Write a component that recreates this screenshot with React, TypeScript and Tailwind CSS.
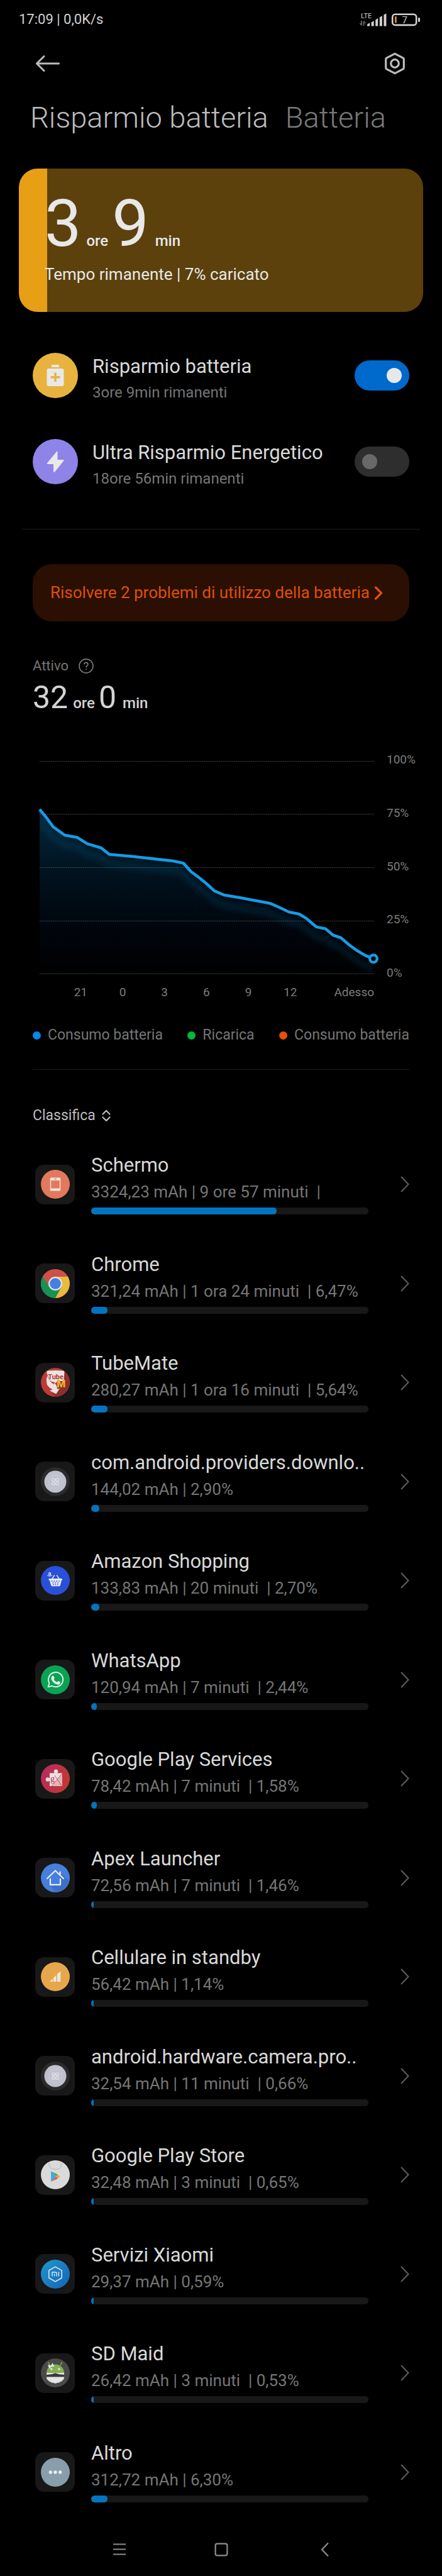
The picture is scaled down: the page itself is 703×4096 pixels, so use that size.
import type { ReactNode } from "react";

type App = { name: string; detail: string; share: number; icon: ReactNode };

const Disc = ({ fill, children }: { fill: string; children?: ReactNode }) => (
  <svg viewBox="0 0 46 46" className="size-[46px]" aria-hidden="true">
    <circle cx="23" cy="23" r="23" fill={fill} />
    {children}
  </svg>
);

const SystemIcon = () => (
  <Disc fill="#2b2b2b">
    <circle cx="23" cy="23" r="17.5" fill="#bfc2cd" />
    <circle cx="23" cy="23" r="10.4" fill="none" stroke="#cccfd8" strokeWidth="0.9" />
    <g fill="none" stroke="#e4e6ec" strokeWidth="1.1">
      <circle cx="20" cy="20" r="2.300" />
      <circle cx="26" cy="20" r="2.300" />
      <circle cx="20" cy="26" r="2.300" />
      <circle cx="26" cy="26" r="2.300" />
    </g>
  </Disc>
);

const ScreenIcon = () => (
  <Disc fill="#e3795c">
    <rect x="14.8" y="12.6" width="16.4" height="20.8" rx="1.2" fill="#ece6e3" />
    <rect x="16.2" y="17" width="13.6" height="12.6" fill="#e3795c" />
    <rect x="21" y="14" width="4" height="1.4" rx="0.7" fill="#e3795c" />
  </Disc>
);

const ChromeIcon = () => (
  <Disc fill="#cf5044">
    <path d="M3.1 11.5 A23 23 0 0 0 23 46 L32.6 28.5 L23 23 L13.4 28.5 Z" fill="#159255" />
    <path d="M43 12 A23 23 0 0 1 23 46 L32.6 28.5 L29 14 L23 12 Z" fill="#e9ba3c" />
    <path d="M3.1 11.5 A23 23 0 0 1 43 12 L23 12 L13 23 Z" fill="#cf5044" />
    <circle cx="23" cy="23" r="11" fill="#e6e6e6" />
    <circle cx="23" cy="23" r="8.8" fill="#4380e2" />
  </Disc>
);

const TubeMateIcon = () => (
  <Disc fill="#bd3a37">
    <path d="M36.5 5 A23 23 0 0 1 23 46 L17 40 L28 30 Z" fill="#8f2d2b" />
    <path d="M9.3 7 Q9.300 4.800 12 4.600 Q23 3.200 34.500 4.600 Q37.400 4.800 37.400 7 L36.500 21 H26 L24 24 L12 20Z" fill="#e9e4e4" />
    <path
      d="M10.500 11 Q7 18 9.300 26.500 Q12.500 32 18 34.500 L12.800 36 L24.300 41.800 L30.700 32 L26.500 33.500 Q26 26.500 20 22.500 Q21 25 20.500 26 Q13 21 10.500 11Z"
      fill="#e9e4e4"
      stroke="#b03532"
      strokeWidth="0.700"
    />
    <text x="23.600" y="18.400" textAnchor="middle" fontFamily="Roboto" fontWeight="700" fontSize="11" fill="#b83431">
      Tube
    </text>
    <text x="32.300" y="31" textAnchor="middle" fontFamily="Roboto" fontWeight="900" fontSize="16" fill="#ebb52b">
      M
    </text>
  </Disc>
);

const AmazonIcon = () => (
  <Disc fill="#2850d8">
    <text x="14" y="15" textAnchor="middle" fontFamily="Roboto" fontWeight="700" fontSize="9" fill="#e6e9f5">
      a
    </text>
    <path d="M10 15.200 Q14 17.500 18 15.200" fill="none" stroke="#e6e9f5" strokeWidth="0.900" />
    <path d="M17.500 21 L21.800 14.500 M29.500 21 L25.200 14.500" stroke="#e6e9f5" strokeWidth="1.400" />
    <path d="M12.500 20 H34 V22.500 H33 L30.800 31 Q30.500 32.300 29 32.300 H18 Q16.500 32.300 16.200 31 L13.700 22.500 H12.500Z" fill="#e6e9f5" />
    <g fill="#2850d8">
      {[17.6, 21.4, 25.2, 29].map((x) => (
        <circle key={x} cx={x} cy="24.200" r="0.900" />
      ))}
      {[19.4, 23.3, 27.2].map((x) => (
        <circle key={x} cx={x} cy="26.900" r="0.900" />
      ))}
      {[20, 23.3, 26.6].map((x) => (
        <circle key={x} cx={x} cy="29.600" r="0.900" />
      ))}
    </g>
  </Disc>
);

const WhatsAppIcon = () => (
  <Disc fill="#0aa353">
    <path
      d="M11.600 34.400 L13.400 28.200 A11.600 11.600 0 1 1 17.800 32.700 Z"
      fill="none"
      stroke="#e8f1ec"
      strokeWidth="1.900"
      strokeLinejoin="round"
    />
    <path
      d="M18.300 16.800 q1.400 -1 2.200 0.400 l1.100 2.500 q0.300 0.800 -1.200 2.300 q1.800 3.400 5.200 4.900 q1.500 -1.900 2.200 -1.800 l2.700 1.300 q0.900 0.500 0.300 2 q-1.300 2.600 -4.300 2.200 q-7.500 -1.700 -9.800 -8.600 q-0.800 -3.500 1.600 -5.200Z"
      fill="#e8f1ec"
    />
  </Disc>
);

const PlayServicesIcon = () => (
  <Disc fill="url(#services)">
    <defs>
      <linearGradient id="services" x1="0" y1="0.300" x2="1" y2="0.700">
        <stop offset="0" stopColor="#b52d5e" />
        <stop offset="1" stopColor="#c2392f" />
      </linearGradient>
    </defs>
    <rect x="14" y="14.500" width="20" height="20.500" fill="#e2b5b9" />
    <path d="M14 14.500 H34 L18 35 H14Z" fill="#ecdfe1" />
    <circle cx="24" cy="11.800" r="3.200" fill="#ecdfe1" />
    <circle cx="11" cy="24.500" r="3.200" fill="#ecdfe1" />
    <path d="M17 35 L34 15 M22 18 L33 34.500" stroke="#b5394a" strokeWidth="0.800" />
    <text x="18.500" y="28" textAnchor="middle" fontFamily="Liberation Serif" fontSize="14" fill="#b5314f">
      g
    </text>
  </Disc>
);

const ApexIcon = () => (
  <Disc fill="#467fdc">
    <path d="M30 13 L44.500 27 A23 23 0 0 1 23 46 L16 35 L30 33Z" fill="#3d71c7" />
    <path
      d="M10 24 L23 11.500 L36 24 M30.600 18 V13.500 M15 24.500 V33.800 H31 V24.500"
      fill="none"
      stroke="#e7ecf6"
      strokeWidth="2.200"
      strokeLinecap="round"
      strokeLinejoin="round"
    />
  </Disc>
);

const CellIcon = () => (
  <Disc fill="#e6a74c">
    <path d="M14.500 31 V30.500 L18.700 26.500 V31Z M20 31 V25 L24.500 20.500 V31Z M26 31 V19 L31.300 14.500 V31Z" fill="#ece8e0" />
  </Disc>
);

const PlayStoreIcon = () => (
  <Disc fill="#dadada">
    <path d="M13 4.500 Q13 14.500 23 14.500 Q33 14.500 33 4.500" fill="none" stroke="#c2c2c2" strokeWidth="1.300" />
    <path d="M16 17.500 V34 L24.500 26Z" fill="#4ba6dc" />
    <path d="M16 17.500 L24.500 26 L27 22.600Z" fill="#35b56c" />
    <path d="M16 34 L24.500 26 L27 29Z" fill="#dd5560" />
    <path d="M24 25.800 L26.500 22.400 L30.500 25.800 L26.500 29.300Z" fill="#e9a63c" />
  </Disc>
);

const XiaomiIcon = () => (
  <Disc fill="url(#xiaomi)">
    <defs>
      <linearGradient id="xiaomi" x1="0" y1="0" x2="1" y2="1">
        <stop offset="0" stopColor="#1f98cb" />
        <stop offset="1" stopColor="#1563b6" />
      </linearGradient>
    </defs>
    <path d="M23 11.300 L33.200 17.100 V29 L23 34.800 L12.800 29 V17.100Z" fill="none" stroke="#e3edf5" strokeWidth="1.500" strokeLinejoin="round" />
    <path d="M18 26.500 V20 H23.200 Q25.200 20 25.200 22 V26.500 M21.600 22.500 V26.500 M28.400 19.500 V26.500" fill="none" stroke="#e3edf5" strokeWidth="1.400" />
  </Disc>
);

const SdMaidIcon = () => (
  <Disc fill="#4a4a4a">
    <path d="M9 23 A14 13.500 0 0 1 37 23Z" fill="#84b053" />
    <path d="M14.500 11 L12 6.500 M31 11 L33.500 6.500" stroke="#84b053" strokeWidth="1.500" strokeLinecap="round" />
    <path d="M9 23 H37 V26 Q29 26 23 23.500 Q17 26 9 26Z" fill="#e4e4e4" />
    <path d="M9 26 Q17 26 23 23.500 Q29 26 37 26 V29 H9Z" fill="#3a3a3a" />
    <path d="M9 29.500 H37 V30 Q37 34 34.500 34.500 Q33.500 37 31 37 Q29 39.500 26.500 38.500 Q23 41 19.500 38.500 Q17 39.500 15 37 Q12.500 37 11.500 34.500 Q9 34 9 30Z" fill="#e4e4e4" />
    <path d="M11 10 L16 11.500 L18.500 7 L21.500 13 L16.500 13 L13.500 16.500Z" fill="#e9e9e9" />
    <circle cx="16.800" cy="17" r="1.700" fill="#e4e4e4" />
    <circle cx="29" cy="17" r="1.700" fill="#e4e4e4" />
  </Disc>
);

const OtherIcon = () => (
  <Disc fill="#889eac">
    <g fill="#ececec">
      <circle cx="15.300" cy="23" r="2.700" />
      <circle cx="23" cy="23" r="2.700" />
      <circle cx="30.700" cy="23" r="2.700" />
    </g>
  </Disc>
);

const apps: App[] = [
  { name: "Schermo", detail: "3324,23 mAh | 9 ore 57 minuti  |", share: 67, icon: <ScreenIcon /> },
  { name: "Chrome", detail: "321,24 mAh | 1 ora 24 minuti  | 6,47%", share: 6, icon: <ChromeIcon /> },
  { name: "TubeMate", detail: "280,27 mAh | 1 ora 16 minuti  | 5,64%", share: 6, icon: <TubeMateIcon /> },
  { name: "com.android.providers.downlo..", detail: "144,02 mAh | 2,90%", share: 3, icon: <SystemIcon /> },
  { name: "Amazon Shopping", detail: "133,83 mAh | 20 minuti  | 2,70%", share: 3, icon: <AmazonIcon /> },
  { name: "WhatsApp", detail: "120,94 mAh | 7 minuti  | 2,44%", share: 2, icon: <WhatsAppIcon /> },
  { name: "Google Play Services", detail: "78,42 mAh | 7 minuti  | 1,58%", share: 2, icon: <PlayServicesIcon /> },
  { name: "Apex Launcher", detail: "72,56 mAh | 7 minuti  | 1,46%", share: 1, icon: <ApexIcon /> },
  { name: "Cellulare in standby", detail: "56,42 mAh | 1,14%", share: 1, icon: <CellIcon /> },
  { name: "android.hardware.camera.pro..", detail: "32,54 mAh | 11 minuti  | 0,66%", share: 1, icon: <SystemIcon /> },
  { name: "Google Play Store", detail: "32,48 mAh | 3 minuti  | 0,65%", share: 1, icon: <PlayStoreIcon /> },
  { name: "Servizi Xiaomi", detail: "29,37 mAh | 0,59%", share: 1, icon: <XiaomiIcon /> },
  { name: "SD Maid", detail: "26,42 mAh | 3 minuti  | 0,53%", share: 1, icon: <SdMaidIcon /> },
  { name: "Altro", detail: "312,72 mAh | 6,30%", share: 6, icon: <OtherIcon /> },
];

const StatusBar = () => (
  <div className="flex items-center justify-between pt-[18px] pr-[34px] pl-[30px] text-[#d2d2d2]">
    <p className="text-[22px] leading-[26px]">17:09 | 0,0K/s</p>
    <svg viewBox="0 0 98 24" className="h-6 w-[98px]" role="img" aria-label="LTE, batteria 7%">
      <text x="3" y="9.500" fontFamily="Roboto" fontSize="11" fill="#d2d2d2">
        LTE
      </text>
      <path d="M4 14 V21 M4 21.500 L1.500 18 M7.500 22 V15 M7.500 14.500 L10 18" stroke="#5d5d5d" strokeWidth="2" />
      <path d="M13 22.500 V20 L17 17 V22.500Z M19.600 22.500 V16.500 L23.600 14 V22.500Z M26.200 22.500 V12.500 L30.200 10 V22.500Z M32.800 22.500 V8.500 L36.800 6 V22.500Z M39.400 22.500 V4.500 L43.400 2.500 V22.500Z" fill="#d2d2d2" />
      <rect x="53.200" y="3.700" width="38" height="17.200" rx="4.500" fill="none" stroke="#d2d2d2" strokeWidth="2.600" />
      <rect x="94" y="9" width="3" height="7" rx="1.400" fill="#d2d2d2" />
      <rect x="57" y="7" width="2.800" height="10.500" rx="1" fill="#d98c1c" />
      <text x="72.800" y="17.600" textAnchor="middle" fontFamily="Roboto" fontSize="15" fill="#d2d2d2">
        7
      </text>
    </svg>
  </div>
);

const Toolbar = () => (
  <div className="mt-[39px] flex items-center justify-between px-14">
    <button type="button" aria-label="Indietro" className="flex h-9 w-10 items-center">
      <svg viewBox="0 0 40 36" className="h-9 w-10" fill="none" stroke="#bcbcbc" strokeWidth="3" strokeLinecap="round" strokeLinejoin="round">
        <path d="M2.500 18 H37.500 M14 6.500 L2.500 18 L14 29.500" />
      </svg>
    </button>
    <button type="button" aria-label="Impostazioni" className="flex size-9 items-center justify-center">
      <svg viewBox="0 0 36 36" className="size-9" fill="none" stroke="#bcbcbc" strokeWidth="3.200" strokeLinejoin="round">
        <path d="M17 2.300 L30 9.200 Q31.300 10 31.300 11.500 V24.500 Q31.300 26 30 26.800 L17 33.700 L4 26.800 Q2.700 26 2.700 24.500 V11.500 Q2.700 10 4 9.200Z" />
        <circle cx="17" cy="18" r="6.300" />
      </svg>
    </button>
  </div>
);

const Duration = ({ hours, minutes, size }: { hours: string; minutes: string; size: "large" | "small" }) => {
  const digits = size === "large" ? "text-[104px] leading-[104px]" : "text-[50px] leading-[50px]";
  return (
    <p className="flex items-baseline text-2xl font-medium">
      <span className={`${digits} font-normal`}>{hours}</span>
      <span className="ml-2">ore</span>
      <span className={`${digits} ml-1.5 font-normal`}>{minutes}</span>
      <span className="ml-2.5">min</span>
    </p>
  );
};

const Mode = ({ id, title, detail, on, icon }: { id: string; title: string; detail: string; on: boolean; icon: ReactNode }) => (
  <div className="flex items-start">
    {icon}
    <label htmlFor={id} className="ml-[23px] flex-1 pt-1">
      <span className="block text-[31px] leading-9 text-[#d8d8d8]">{title}</span>
      <span className="mt-2 block text-2xl leading-[30px] text-[#757575]">{detail}</span>
    </label>
    <input
      id={id}
      type="checkbox"
      role="switch"
      defaultChecked={on}
      className="mt-3 h-12 w-[87px] appearance-none rounded-full bg-[#2e2e2e] p-3 before:block before:size-6 before:rounded-full before:bg-[#686868] checked:bg-[#0069cc] checked:before:ml-auto checked:before:bg-[#e8e8e8]"
    />
  </div>
);

const line =
  "M0 77 L10.800 90 L21.500 104.600 L40 118 L60 121.600 L75.800 131.600 L98 138.200 L110.800 148.500 L147.500 151.800 L212.500 159 L228.700 162.400 L240.800 176 L254 185.700 L266.300 195.700 L278 206.600 L294 213.300 L318 217.200 L367.200 226.600 L380.700 232.500 L396.800 240.200 L412.500 243.200 L424.200 250.200 L440 263.800 L454.700 266.800 L466.800 277 L479 281 L491 291.300 L504 301 L517.500 309 L531 314.300";
const area = `${line} V339 H0Z`;

const Chart = () => (
  <figure className="mt-16 pl-[11px]">
    <div className="flex">
      <svg viewBox="0 0 532 339" className="mt-3 min-w-0 flex-1 self-start overflow-visible" role="img" aria-label="Livello della batteria">
        <defs>
          <linearGradient id="fade" gradientUnits="userSpaceOnUse" x1="0" y1="77" x2="0" y2="339">
            <stop offset="0" stopColor="#04283c" />
            <stop offset="0.350" stopColor="#011421" />
            <stop offset="0.700" stopColor="#00060d" />
            <stop offset="1" stopColor="#000" />
          </linearGradient>
          <clipPath id="under">
            <path d={area} />
          </clipPath>
          <filter id="soft" x="-10%" y="-10%" width="120%" height="120%">
            <feGaussianBlur stdDeviation="4" />
          </filter>
        </defs>
        <path d={area} fill="url(#fade)" />
        <g clipPath="url(#under)">
          <path d={line} transform="translate(0 16)" fill="none" stroke="#0d5878" strokeOpacity="0.250" strokeWidth="10" filter="url(#soft)" />
        </g>
        <path
          d="M0 0.500 H532 M0 84.500 H532 M0 169.500 H532 M0 254.500 H532 M0 338.500 H532"
          stroke="#8a8a8a"
          strokeOpacity="0.450"
          strokeDasharray="2 1"
        />
        <path d={line} fill="none" stroke="#149ce6" strokeWidth="4.600" strokeLinejoin="round" />
        <circle cx="531" cy="314.300" r="5.800" fill="#000" stroke="#149ce6" strokeWidth="4.400" />
      </svg>
      <div className="flex h-[359px] w-14 shrink-0 flex-col justify-between pl-5 text-[19px] leading-5 text-[#7c7c7c]">
        <span>100%</span>
        <span>75%</span>
        <span>50%</span>
        <span>25%</span>
        <span>0%</span>
      </div>
    </div>
    <div className="mt-[11px] mr-14 flex pl-8 text-center text-[19px] leading-5 text-[#7c7c7c]">
      {["21", "0", "3", "6", "9", "12"].map((hour) => (
        <span key={hour} className="flex-[2]">
          {hour}
        </span>
      ))}
      <span className="flex-[3] text-right">Adesso</span>
    </div>
  </figure>
);

const Legend = () => (
  <ul className="mt-11 flex justify-between text-[23px] leading-7 text-[#757575]">
    <li className="flex items-center gap-[11px]">
      <span className="size-[13px] rounded-full bg-[#0089ea]" />
      Consumo batteria
    </li>
    <li className="flex items-center gap-[11px]">
      <span className="size-[13px] rounded-full bg-[#00b83c]" />
      Ricarica
    </li>
    <li className="flex items-center gap-[11px]">
      <span className="size-[13px] rounded-full bg-[#e84f00]" />
      Consumo batteria
    </li>
  </ul>
);

const AppRow = ({ app }: { app: App }) => (
  <li className="odd:h-[158px] even:h-[157px]">
    <button type="button" className="flex h-full w-full items-center text-left">
      <span className="ml-1 flex size-[63px] shrink-0 items-center justify-center rounded-[14px] bg-[#181818]">{app.icon}</span>
      <span className="ml-[26px] min-w-0 flex-1">
        <span className="block text-[31px] leading-9 whitespace-nowrap text-[#d8d8d8]">{app.name}</span>
        <span className="mt-[9px] block text-[26px] leading-[30px] whitespace-pre text-[#757575]">{app.detail}</span>
        <span className="mt-2.5 block h-[11px] overflow-hidden rounded-[5px] bg-[#181818]">
          <span className="block h-full rounded-[5px] bg-[#0474be]" style={{ width: `${app.share}%` }} />
        </span>
      </span>
      <svg viewBox="0 0 14 26" className="ml-[51px] h-[26px] w-3.5 shrink-0" fill="none" stroke="#5e5e5e" strokeWidth="2" aria-hidden="true">
        <path d="M1 1 L12.500 13 L1 25" />
      </svg>
    </button>
  </li>
);

export default function App() {
  return (
    <div className="min-h-screen bg-black font-['Roboto',sans-serif]">
      <StatusBar />
      <Toolbar />

      <nav className="mt-10 flex gap-[27px] pl-12 text-[47px] leading-[56px] font-light">
        <button type="button" className="text-[#bcbcbc]">
          Risparmio batteria
        </button>
        <button type="button" className="text-[#787878]">
          Batteria
        </button>
      </nav>

      <main>
        <section className="mx-[30px] mt-[53px] h-[228px] rounded-[30px] bg-[linear-gradient(to_right,#e79f15_7%,#5c410d_7%)] pt-9 pl-[41px] text-[#e8e8e8]">
          <Duration hours="3" minutes="9" size="large" />
          <p className="mt-[13px] text-[26px] leading-[30px]">Tempo rimanente | 7% caricato</p>
        </section>

        <section className="mx-[52px] mt-[65px] flex flex-col gap-[59px]">
          <Mode
            id="saver"
            title="Risparmio batteria"
            detail="3ore 9min rimanenti"
            on
            icon={
              <svg viewBox="0 0 72 72" className="size-[72px]" aria-hidden="true">
                <circle cx="36" cy="36" r="36" fill="#e7b33e" />
                <rect x="30" y="19" width="12" height="4" rx="1" fill="#e8e8e8" />
                <rect x="22.500" y="25" width="27" height="28" rx="3" fill="#e8e8e8" />
                <path d="M36 31.500 V46 M28.500 38.700 H43.500" stroke="#e7b33e" strokeWidth="3.400" />
              </svg>
            }
          />
          <Mode
            id="ultra"
            title="Ultra Risparmio Energetico"
            detail="18ore 56min rimanenti"
            on={false}
            icon={
              <svg viewBox="0 0 72 72" className="size-[72px]" aria-hidden="true">
                <circle cx="36" cy="36" r="36" fill="#8e83e6" />
                <path d="M38.500 19.500 L22.800 38.500 Q22 40 24 40 H33 V52 Q34 54 35.500 52 L49.500 34.500 Q50 33 48.500 33 H39.500 V20Z" fill="#e8e8e8" />
              </svg>
            }
          />
        </section>

        <hr className="mx-[35px] mt-[65px] border-[#1c1c1c]" />

        <section className="mx-[52px] mt-[55px]">
          <button
            type="button"
            className="flex h-[91px] w-full items-center rounded-[30px] bg-[#2a0f02] pl-7 text-[26px] text-[#de4f07]"
          >
            Risolvere 2 problemi di utilizzo della batteria
            <svg viewBox="0 0 14 22" className="ml-[7px] h-[22px] w-3.5" fill="none" stroke="#de4f07" strokeWidth="3.400" strokeLinecap="round" strokeLinejoin="round" aria-hidden="true">
              <path d="M2.500 2 L11.500 11 L2.500 20" />
            </svg>
          </button>

          <div className="mt-[58px] flex items-center text-[22px] leading-[26px] text-[#757575]">
            Attivo
            <button type="button" aria-label="Informazioni" className="ml-4">
              <svg viewBox="0 0 24 24" className="size-6" fill="none" stroke="#8a8a8a" strokeWidth="1.400">
                <circle cx="12" cy="12" r="11" />
                <path d="M9 9.500 Q9 6.500 12 6.500 Q15 6.500 15 9.200 Q15 10.700 13.300 11.900 Q12 12.800 12 14.500 M12 16.300 V18" />
              </svg>
            </button>
          </div>
          <div className="mt-3 text-[#d4d4d4]">
            <Duration hours="32" minutes="0" size="small" />
          </div>

          <Chart />
          <Legend />

          <hr className="mt-10 border-[#1c1c1c]" />

          <button type="button" className="mt-[59px] flex items-center gap-2.5 text-[23px] leading-7 text-[#bcbcbc]">
            Classifica
            <svg viewBox="0 0 14 20" className="h-5 w-3.5" fill="none" stroke="#bcbcbc" strokeWidth="2.200" strokeLinecap="round" strokeLinejoin="round" aria-hidden="true">
              <path d="M1.500 7.500 L7 2 L12.500 7.500 M1.500 12.500 L7 18 L12.500 12.500" />
            </svg>
          </button>

          <ul className="mt-4">
            {apps.map((app) => (
              <AppRow key={app.name} app={app} />
            ))}
          </ul>
        </section>
      </main>

      <footer className="flex h-[87px] items-center justify-center gap-[138px]">
        <button type="button" aria-label="App recenti">
          <svg viewBox="0 0 24 24" className="size-6" stroke="#8e8e8e" strokeWidth="2.200">
            <path d="M2 4.500 H22 M2 12.500 H22 M2 20.500 H22" />
          </svg>
        </button>
        <button type="button" aria-label="Home">
          <svg viewBox="0 0 24 24" className="size-6" fill="none" stroke="#8e8e8e" strokeWidth="2.200">
            <rect x="2.600" y="3.600" width="18.800" height="18.800" rx="3" />
          </svg>
        </button>
        <button type="button" aria-label="Indietro">
          <svg viewBox="0 0 24 24" className="size-6" fill="none" stroke="#8e8e8e" strokeWidth="2.200">
            <path d="M20 2.500 L10 13 L20 23.500" />
          </svg>
        </button>
      </footer>
    </div>
  );
}
